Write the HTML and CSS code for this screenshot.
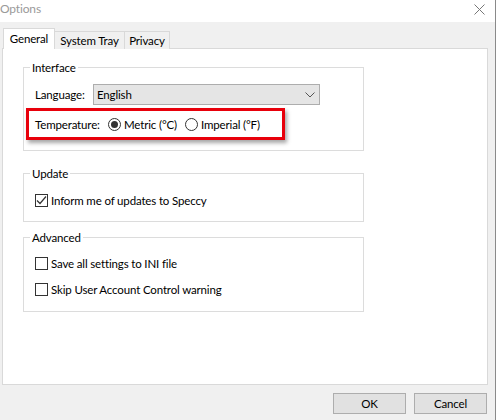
FILE: index.html
```html
<!DOCTYPE html>
<html>
<head>
<meta charset="utf-8">
<link rel="stylesheet" href="styles.css">
</head>
<body>
<div class="window">
  <div class="titlebar">
    <span class="title">Options</span>
    <svg class="close" width="11" height="11" viewBox="0 0 11 11"><path d="M0.5 0.5L10.5 10.5M10.5 0.5L0.5 10.5" stroke="#777" stroke-width="1" fill="none"/></svg>
  </div>
  <div class="tabs">
    <div class="tab active">General</div>
    <div class="tab t-tray">System Tray</div>
    <div class="tab t-priv">Privacy</div>
  </div>
  <div class="panel">
    <fieldset class="group g-interface">
      <legend>Interface</legend>
      <div class="lang-row">
        <span class="lang-label">Language:</span>
        <div class="combo">
          <span>English</span>
          <svg class="chev" width="10" height="6" viewBox="0 0 10 6"><path d="M0.5 0.5L5 5L9.5 0.5" stroke="#555" stroke-width="1" fill="none"/></svg>
        </div>
      </div>
      <div class="highlight">
        <span class="temp-label">Temperature:</span>
        <span class="radio checked"></span><span class="opt">Metric (°C)</span>
        <span class="radio"></span><span class="opt">Imperial (°F)</span>
      </div>
    </fieldset>
    <fieldset class="group g-update">
      <legend>Update</legend>
      <div class="check-row">
        <span class="checkbox"><svg width="11" height="11" viewBox="0 0 11 11"><path d="M1 5.5L4 8.5L10 1.5" stroke="#333" stroke-width="1.2" fill="none"/></svg></span>
        <span>Inform me of updates to Speccy</span>
      </div>
    </fieldset>
    <fieldset class="group g-adv">
      <legend>Advanced</legend>
      <div class="check-row first">
        <span class="checkbox"></span>
        <span>Save all settings to INI file</span>
      </div>
      <div class="check-row second">
        <span class="checkbox"></span>
        <span>Skip User Account Control warning</span>
      </div>
    </fieldset>
  </div>
  <div class="footer">
    <button class="btn">OK</button>
    <button class="btn">Cancel</button>
  </div>
</div>
</body>
</html>
```
FILE: styles.css
```css
html, body {
  margin: 0;
  padding: 0;
}
body {
  font-family: Lato, "Noto Sans", sans-serif;
  font-size: 11.5px;
  letter-spacing: -0.15px;
  color: #000;
  background: #f0f0f0;
  white-space: nowrap;
}
.window {
  width: 495px;
  height: 420px;
  border-right: 1px solid #8a8a8a;
  background: #f0f0f0;
  overflow: hidden;
}
.titlebar {
  height: 22px;
  background: #fff;
  display: flex;
  align-items: center;
}
.title {
  color: #9a9a9a;
  font-size: 12px;
  line-height: 14px;
  margin-top: -4px;
}
.close {
  margin-left: auto;
  margin-right: 10px;
  margin-top: -3px;
}
.tabs {
  display: flex;
  align-items: flex-end;
  margin-top: 7px;
  padding-left: 3px;
  height: 20px;
  position: relative;
  z-index: 1;
  margin-bottom: -1px;
}
.tab {
  box-sizing: border-box;
  height: 18px;
  border: 1px solid #d9d9d9;
  border-bottom: none;
  background: #f0f0f0;
  display: flex;
  align-items: center;
  justify-content: center;
  line-height: 14px;
  margin-left: -1px;
  padding-top: 1px;
  flex-shrink: 0;
}
.tab.active {
  margin-left: 0;
  height: 21px;
  width: 52px;
  background: #fff;
  padding-top: 0;
}
.t-tray { width: 71px; }
.t-priv { width: 46px; }
.panel {
  box-sizing: border-box;
  margin-left: 2px;
  width: 486px;
  height: 337px;
  border: 1px solid #d9d9d9;
  background: #fff;
  padding-top: 0.1px;
}
.group {
  box-sizing: border-box;
  width: 341px;
  margin: 0 0 0 20px;
  border: 1px solid #dcdcdc;
  padding: 0;
  min-width: 0;
}
.group legend {
  margin-left: 6px;
  padding: 2px 2px 0;
  line-height: 14px;
}
.g-interface { margin-top: 10px; padding-bottom: 10px; }
.g-update { margin-top: 14px; padding-bottom: 14px; }
.g-adv { margin-top: 7px; padding-bottom: 15px; }
.lang-row {
  display: flex;
  align-items: center;
  margin-top: 9px;
  padding-left: 11px;
  height: 21px;
}
.lang-label { width: 58px; flex-shrink: 0; }
.combo {
  box-sizing: border-box;
  width: 227px;
  height: 21px;
  border: 1px solid #adadad;
  background: #e5e5e5;
  display: flex;
  align-items: center;
  padding-left: 3px;
}
.chev { margin-left: auto; margin-right: 4px; }
.highlight {
  box-sizing: border-box;
  margin-top: 3px;
  margin-left: 2px;
  width: 259px;
  height: 32px;
  border: 3px solid #e8000b;
  box-shadow: 2px 3px 4px rgba(0,0,0,0.35);
  display: flex;
  align-items: center;
  padding-left: 6px;
}
.temp-label { width: 73px; flex-shrink: 0; }
.radio {
  box-sizing: border-box;
  width: 13px;
  height: 13px;
  border: 1px solid #333;
  border-radius: 50%;
  background: #fff;
  display: flex;
  align-items: center;
  justify-content: center;
  margin-right: 3px;
  flex-shrink: 0;
}
.radio.checked::after {
  content: "";
  width: 7px;
  height: 7px;
  border-radius: 50%;
  background: #333;
}
.opt { width: 61px; flex-shrink: 0; }
.check-row {
  display: flex;
  align-items: center;
  height: 13px;
  padding-left: 11px;
}
.g-update .check-row { margin-top: 13px; }
.check-row.first { margin-top: 12px; }
.check-row.second { margin-top: 13px; }
.checkbox {
  box-sizing: border-box;
  width: 13px;
  height: 13px;
  border: 1px solid #333;
  background: #fff;
  display: flex;
  align-items: center;
  justify-content: center;
  margin-right: 3px;
  flex-shrink: 0;
}
.footer {
  display: flex;
  justify-content: flex-end;
  gap: 8px;
  margin-top: 8px;
  padding-right: 8px;
}
.btn {
  box-sizing: border-box;
  width: 73px;
  height: 21px;
  border: 1px solid #adadad;
  background: #e1e1e1;
  font-family: inherit;
  font-size: 11.5px;
  letter-spacing: inherit;
  color: #000;
  padding: 0;
  line-height: 14px;
}
```
